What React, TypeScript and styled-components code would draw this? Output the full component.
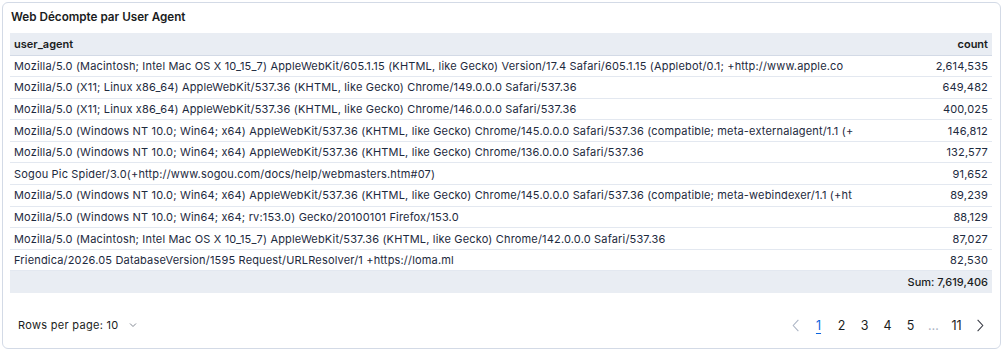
import styled, { createGlobalStyle } from "styled-components";

const GlobalStyle = createGlobalStyle`
  * { box-sizing: border-box; }
  body {
    margin: 0;
    background: #ffffff;
    font-family: Inter, "Noto Sans", sans-serif;
  }
`;

const Panel = styled.div`
  margin: 2px 3px 2px 2px;
  height: 347px;
  border: 1px solid #d3dae6;
  border-radius: 6px;
  background: #ffffff;
  display: flex;
  flex-direction: column;
  padding: 0 8px 0 7px;
`;

const Title = styled.h2`
  margin: 0;
  padding: 5px 0 0 1px;
  height: 30px;
  font-size: 11.7px;
  font-weight: 600;
  color: #1a1c21;
  line-height: 18px;
`;

const Table = styled.table`
  width: 100%;
  border-collapse: collapse;
  table-layout: fixed;
  font-size: 11px;
  letter-spacing: 0.17px;
  color: #1d2a3e;
`;

const HeadCell = styled.th<{ $right?: boolean }>`
  background: #e9edf3;
  height: 22px;
  padding: 0 4px;
  font-weight: 600;
  letter-spacing: 0;
  text-align: ${(p) => (p.$right ? "right" : "left")};
  color: #1a1c21;
  border-bottom: 1px solid #d3dae6;
`;

const Cell = styled.td<{ $right?: boolean }>`
  height: 21.6px;
  padding: 0 4px;
  white-space: nowrap;
  overflow: hidden;
  text-align: ${(p) => (p.$right ? "right" : "left")};
  border-bottom: 1px solid #e3e8f0;
`;

const SumCell = styled.td<{ $right?: boolean }>`
  height: 22px;
  padding: 0 4px;
  background: #e9edf3;
  font-weight: 500;
  letter-spacing: 0;
  text-align: ${(p) => (p.$right ? "right" : "left")};
  color: #1a1c21;
`;

const Footer = styled.div`
  flex: 1;
  display: flex;
  align-items: center;
  justify-content: space-between;
  padding: 10px 2px 0 8px;
  font-size: 11px;
  letter-spacing: 0.3px;
  color: #1a1c21;
`;

const RowsPer = styled.div`
  display: flex;
  align-items: center;
  gap: 8px;
`;

const Pager = styled.div`
  display: flex;
  align-items: center;
`;

const PageButton = styled.span<{ $active?: boolean; $muted?: boolean }>`
  min-width: 23px;
  text-align: center;
  font-size: 12.5px;
  letter-spacing: 0;
  color: ${(p) => (p.$active ? "#0b64dd" : p.$muted ? "#abb4c4" : "#1a1c21")};
  text-decoration: ${(p) => (p.$active ? "underline" : "none")};
  text-underline-offset: 3px;
`;

const Arrow = styled.span`
  width: 22px;
  display: flex;
  justify-content: center;
`;

const rows: [string, string][] = [
  ["Mozilla/5.0 (Macintosh; Intel Mac OS X 10_15_7) AppleWebKit/605.1.15 (KHTML, like Gecko) Version/17.4 Safari/605.1.15 (Applebot/0.1; +http://www.apple.co", "2,614,535"],
  ["Mozilla/5.0 (X11; Linux x86_64) AppleWebKit/537.36 (KHTML, like Gecko) Chrome/149.0.0.0 Safari/537.36", "649,482"],
  ["Mozilla/5.0 (X11; Linux x86_64) AppleWebKit/537.36 (KHTML, like Gecko) Chrome/146.0.0.0 Safari/537.36", "400,025"],
  ["Mozilla/5.0 (Windows NT 10.0; Win64; x64) AppleWebKit/537.36 (KHTML, like Gecko) Chrome/145.0.0.0 Safari/537.36 (compatible; meta-externalagent/1.1 (+", "146,812"],
  ["Mozilla/5.0 (Windows NT 10.0; Win64; x64) AppleWebKit/537.36 (KHTML, like Gecko) Chrome/136.0.0.0 Safari/537.36", "132,577"],
  ["Sogou Pic Spider/3.0(+http://www.sogou.com/docs/help/webmasters.htm#07)", "91,652"],
  ["Mozilla/5.0 (Windows NT 10.0; Win64; x64) AppleWebKit/537.36 (KHTML, like Gecko) Chrome/145.0.0.0 Safari/537.36 (compatible; meta-webindexer/1.1 (+ht", "89,239"],
  ["Mozilla/5.0 (Windows NT 10.0; Win64; x64; rv:153.0) Gecko/20100101 Firefox/153.0", "88,129"],
  ["Mozilla/5.0 (Macintosh; Intel Mac OS X 10_15_7) AppleWebKit/537.36 (KHTML, like Gecko) Chrome/142.0.0.0 Safari/537.36", "87,027"],
  ["Friendica/2026.05 DatabaseVersion/1595 Request/URLResolver/1 +https://loma.ml", "82,530"],
];

const Chevron = ({ dir, color }: { dir: "left" | "right" | "down"; color: string }) => {
  const d =
    dir === "left" ? "M10 2 L4.5 8 L10 14" : dir === "right" ? "M6 2 L11.5 8 L6 14" : "M4 6 L8 10 L12 6";
  const size = dir === "down" ? 12 : 15;
  return (
    <svg width={size} height={size} viewBox="0 0 16 16">
      <path d={d} fill="none" stroke={color} strokeWidth="1.1" />
    </svg>
  );
};

export default function App() {
  return (
    <>
      <GlobalStyle />
      <Panel>
        <Title>Web Décompte par User Agent</Title>
        <Table>
          <colgroup>
            <col style={{ width: 843 }} />
            <col />
          </colgroup>
          <thead>
            <tr>
              <HeadCell>user_agent</HeadCell>
              <HeadCell $right>count</HeadCell>
            </tr>
          </thead>
          <tbody>
            {rows.map(([ua, count]) => (
              <tr key={ua}>
                <Cell>{ua}</Cell>
                <Cell $right>{count}</Cell>
              </tr>
            ))}
            <tr>
              <SumCell />
              <SumCell $right>Sum: 7,619,406</SumCell>
            </tr>
          </tbody>
        </Table>
        <Footer>
          <RowsPer>
            Rows per page: 10
            <Chevron dir="down" color="#69707d" />
          </RowsPer>
          <Pager>
            <Arrow>
              <Chevron dir="left" color="#abb4c4" />
            </Arrow>
            <PageButton $active>1</PageButton>
            <PageButton>2</PageButton>
            <PageButton>3</PageButton>
            <PageButton>4</PageButton>
            <PageButton>5</PageButton>
            <PageButton $muted>…</PageButton>
            <PageButton>11</PageButton>
            <Arrow>
              <Chevron dir="right" color="#343741" />
            </Arrow>
          </Pager>
        </Footer>
      </Panel>
    </>
  );
}
